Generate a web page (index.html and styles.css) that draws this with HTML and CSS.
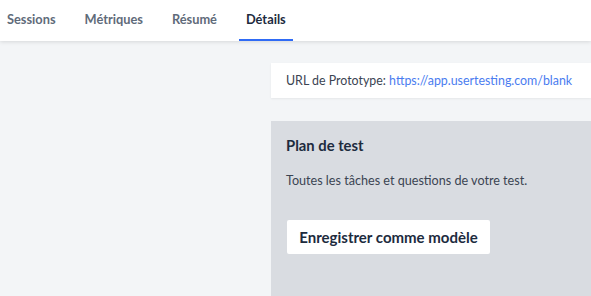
FILE: index.html
```html
<!DOCTYPE html>
<html>
<head>
  <title>Détails</title>
  <link rel="stylesheet" href="styles.css">
</head>
<body>
  <nav class="tabs">
    <a class="tab">Sessions</a>
    <a class="tab">Métriques</a>
    <a class="tab">Résumé</a>
    <a class="tab active">Détails</a>
  </nav>
  <div class="page">
    <aside class="side"></aside>
    <main class="content">
      <div class="url-card">
        <span>URL de Prototype: <a href="#" class="link">https://app.usertesting.com/blank</a></span>
      </div>
      <section class="plan">
        <h3>Plan de test</h3>
        <p>Toutes les tâches et questions de votre test.</p>
        <button class="btn">Enregistrer comme modèle</button>
      </section>
    </main>
  </div>
</body>
</html>
```

FILE: styles.css
```css
html, body {
  height: 296px;
  overflow: hidden;
}
body {
  margin: 0;
  background: #f3f5f7;
  font-family: Lato, "Open Sans", sans-serif;
  color: #2d3748;
}

.tabs {
  display: flex;
  gap: 15px;
  height: 41px;
  background: #fff;
  box-shadow: 0 1px 4px rgba(0, 0, 0, 0.12);
  position: relative;
}
.tab {
  display: flex;
  align-items: center;
  padding: 0 7px 2px 7px;
  font-size: 12.8px;
  font-weight: bold;
  color: #5f6b7a;
  border-bottom: 2px solid transparent;
}
.tab.active {
  color: #1d2b3e;
  border-bottom-color: #2f6bf5;
}

.page {
  display: grid;
  grid-template-columns: 271px 1fr;
}
.content {
  padding-top: 22px;
  min-width: 0;
}

.url-card {
  background: #fff;
  height: 35px;
  display: flex;
  align-items: center;
  padding-left: 15px;
  font-size: 12.4px;
  color: #3b4452;
  white-space: nowrap;
  box-shadow: 0 1px 2px rgba(0, 0, 0, 0.06);
}
.link {
  color: #4a7cf0;
  text-decoration: none;
}

.plan {
  margin-top: 23px;
  background: #d9dce1;
  height: 175px;
  padding: 15px 15px;
  box-sizing: border-box;
}
.plan h3 {
  margin: 0;
  font-size: 14.8px;
  color: #1d2b3e;
}
.plan p {
  margin: 19px 0 0 0;
  font-size: 12.6px;
  color: #3b4452;
}
.btn {
  margin-top: 32px;
  margin-left: 1px;
  width: 203px;
  height: 34px;
  border: none;
  border-radius: 2px;
  background: #fff;
  font-family: Lato, "Open Sans", sans-serif;
  font-size: 15px;
  font-weight: bold;
  color: #1d2b3e;
}
```
